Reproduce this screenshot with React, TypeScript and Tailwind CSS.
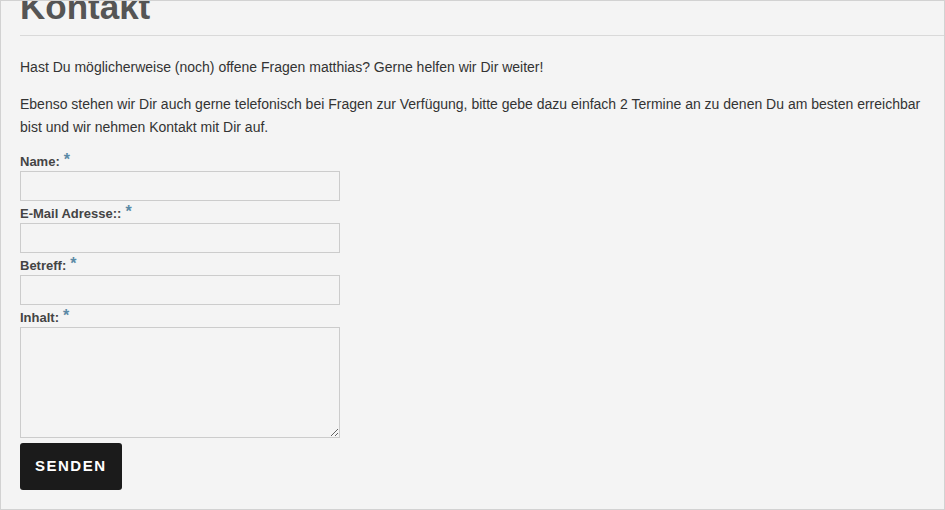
import React from 'react';

const fields = [
  { id: 'name', label: 'Name:' },
  { id: 'email', label: 'E-Mail Adresse::' },
  { id: 'subject', label: 'Betreff:' },
];

function Label({ htmlFor, children }: { htmlFor: string; children: React.ReactNode }) {
  return (
    <label htmlFor={htmlFor} className="flex h-[22px] items-center pt-[3px] text-[13px] font-bold text-[#444]">
      {children}
      <span className="ml-[4px] -mt-[3px] text-[16px] font-bold text-[#5b8aa6]">*</span>
    </label>
  );
}

export default function App() {
  return (
    <div
      className="h-[510px] w-[945px] overflow-hidden border border-[#d2d2d2] bg-[#f4f4f4]"
      style={{ fontFamily: '"Liberation Sans", Arial, sans-serif' }}
    >
      <div className="pl-[19px]">
        <h1 className="-mt-[12px] text-[35px] font-bold leading-[36px] text-[#555]">Kontakt</h1>
        <div className="mt-[10px] h-px bg-[#d9d9d9]" />

        <div className="pr-[6px] text-[14px] leading-[23px] text-[#333]">
          <p className="mt-[20px]">Hast Du möglicherweise (noch) offene Fragen matthias? Gerne helfen wir Dir weiter!</p>
          <p className="mt-[14px]">
            Ebenso stehen wir Dir auch gerne telefonisch bei Fragen zur Verfügung, bitte gebe dazu einfach 2 Termine an
            zu denen Du am besten erreichbar bist und wir nehmen Kontakt mit Dir auf.
          </p>
        </div>

        <form className="mt-[10px] w-[320px]" onSubmit={(e) => e.preventDefault()}>
          {fields.map((f) => (
            <div key={f.id}>
              <Label htmlFor={f.id}>{f.label}</Label>
              <input
                id={f.id}
                type="text"
                className="block h-[30px] w-full border border-[#cccccc] bg-[#f4f4f4] px-2 text-[13px] outline-none"
              />
            </div>
          ))}
          <div>
            <Label htmlFor="content">Inhalt:</Label>
            <textarea
              id="content"
              className="block h-[111px] w-full resize border border-[#cccccc] bg-[#f4f4f4] px-2 text-[13px] outline-none"
            />
          </div>
          <button
            type="submit"
            className="mt-[5px] h-[47px] rounded-[3px] bg-[#1b1b1b] px-[15px] text-[15px] font-bold tracking-[1.5px] text-white"
          >
            SENDEN
          </button>
        </form>
      </div>
    </div>
  );
}
